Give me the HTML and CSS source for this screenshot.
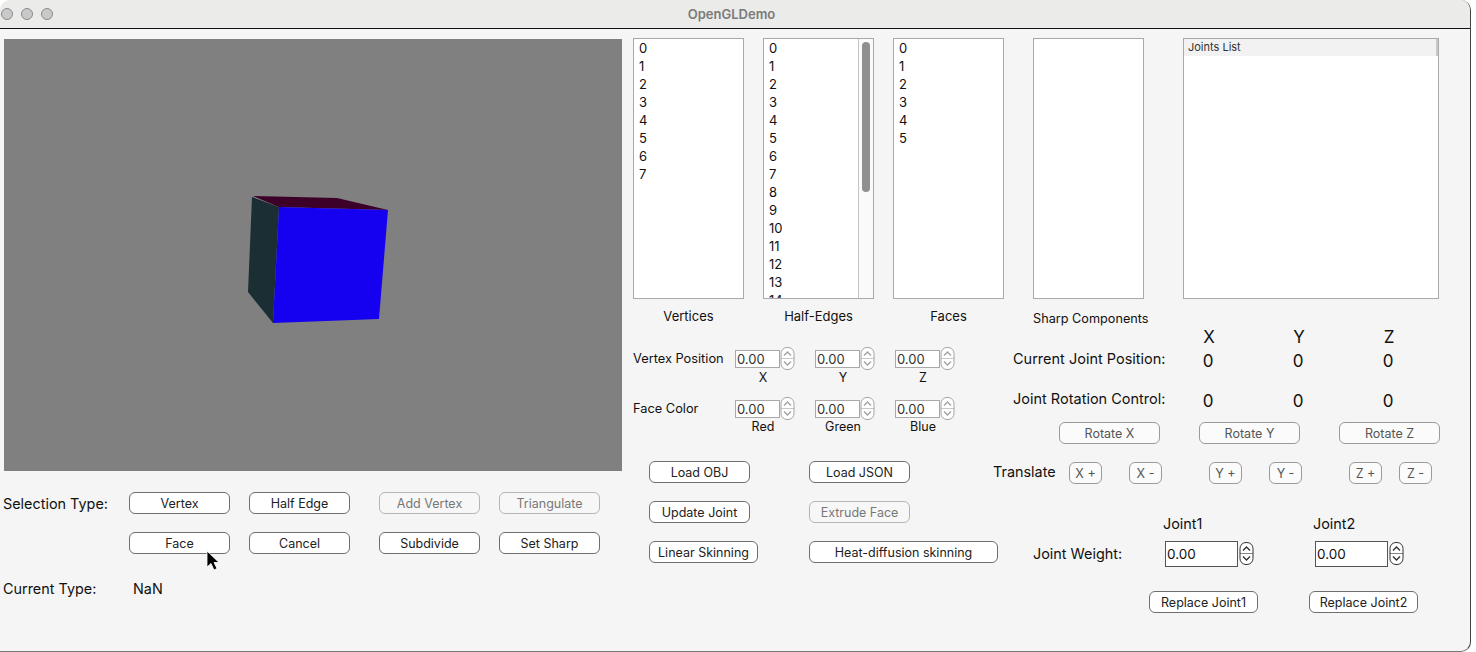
FILE: index.html
```html
<!DOCTYPE html>
<html lang="en">
<head>
    <meta charset="UTF-8">
    <meta name="viewport" content="width=device-width, initial-scale=1.0">
    <title>OpenGLDemo</title>
    <link rel="stylesheet" href="styles.css">
</head>
<body>
    <svg class="sprites" width="0" height="0">
        <symbol id="spin" viewBox="0 0 15 23">
            <rect x="1" y="0.5" width="13" height="22" rx="6" fill="#fff" stroke="currentColor"/>
            <path d="M1 11.5H14" stroke="currentColor" stroke-width="0.6"/>
            <path d="M4 8.5 7.5 5 11 8.5M4 14.5 7.5 18 11 14.5" fill="none" stroke="currentColor" stroke-width="1.4"/>
        </symbol>
    </svg>
    <div class="window">
        <div class="titlebar">
            <span class="light"></span><span class="light"></span><span class="light"></span>
            <div class="title">OpenGLDemo</div>
        </div>

        <div class="content">
            <div class="left">
                <div class="viewport">
                    <svg width="618" height="432" viewBox="4 39 618 432">
                        <polygon points="253,196 337,198 388,210 279,207" fill="#3c0029"/>
                        <polygon points="252,197 279,207 273,323 248,292" fill="#1b2e34"/>
                        <polygon points="279,207 388,210 379,319 273,323" fill="#1500f0"/>
                    </svg>
                </div>
                <div class="sel-row first">
                    <div class="sel-label">Selection Type:</div>
                    <button class="btn">Vertex</button>
                    <button class="btn">Half Edge</button>
                    <button class="btn off wide-gap">Add Vertex</button>
                    <button class="btn off">Triangulate</button>
                </div>
                <div class="sel-row">
                    <div class="sel-label"></div>
                    <button class="btn face-btn">Face</button>
                    <button class="btn">Cancel</button>
                    <button class="btn wide-gap">Subdivide</button>
                    <button class="btn">Set Sharp</button>
                </div>
                <div class="cur-row">
                    <div class="cur-label">Current Type:</div>
                    <div>NaN</div>
                </div>
            </div>

            <div class="right">
                <div class="lists">
                    <div class="list-col">
                        <ul class="list">
                            <li>0</li><li>1</li><li>2</li><li>3</li><li>4</li><li>5</li><li>6</li><li>7</li>
                        </ul>
                        <div class="list-name">Vertices</div>
                    </div>
                    <div class="list-col">
                        <div class="list scrolled">
                            <ul>
                                <li>0</li><li>1</li><li>2</li><li>3</li><li>4</li><li>5</li><li>6</li><li>7</li>
                                <li>8</li><li>9</li><li>10</li><li>11</li><li>12</li><li>13</li><li>14</li>
                            </ul>
                            <div class="scrollbar"><div class="thumb"></div></div>
                        </div>
                        <div class="list-name">Half-Edges</div>
                    </div>
                    <div class="list-col">
                        <ul class="list">
                            <li>0</li><li>1</li><li>2</li><li>3</li><li>4</li><li>5</li>
                        </ul>
                        <div class="list-name">Faces</div>
                    </div>
                    <div class="list-col sharp">
                        <ul class="list"></ul>
                        <div class="list-name">Sharp Components</div>
                    </div>
                    <div class="list-col joints">
                        <div class="list">
                            <div class="list-head">Joints List</div>
                        </div>
                    </div>
                </div>

                <div class="lower">
                    <div class="form-col">
                        <div class="spin-row">
                            <div class="spin-label">Vertex Position</div>
                            <div class="spin-item"><div class="spin"><span class="num">0.00</span><svg width="15" height="23"><use href="#spin"/></svg></div><div class="cap">X</div></div>
                            <div class="spin-item"><div class="spin"><span class="num">0.00</span><svg width="15" height="23"><use href="#spin"/></svg></div><div class="cap">Y</div></div>
                            <div class="spin-item"><div class="spin"><span class="num">0.00</span><svg width="15" height="23"><use href="#spin"/></svg></div><div class="cap">Z</div></div>
                        </div>
                        <div class="spin-row second">
                            <div class="spin-label">Face Color</div>
                            <div class="spin-item"><div class="spin"><span class="num">0.00</span><svg width="15" height="23"><use href="#spin"/></svg></div><div class="cap">Red</div></div>
                            <div class="spin-item"><div class="spin"><span class="num">0.00</span><svg width="15" height="23"><use href="#spin"/></svg></div><div class="cap">Green</div></div>
                            <div class="spin-item"><div class="spin"><span class="num">0.00</span><svg width="15" height="23"><use href="#spin"/></svg></div><div class="cap">Blue</div></div>
                        </div>
                        <div class="load-row top">
                            <button class="btn">Load OBJ</button>
                            <button class="btn">Load JSON</button>
                        </div>
                        <div class="load-row">
                            <button class="btn">Update Joint</button>
                            <button class="btn off">Extrude Face</button>
                        </div>
                        <div class="load-row">
                            <button class="btn linear">Linear Skinning</button>
                            <button class="btn heat">Heat-diffusion skinning</button>
                        </div>
                    </div>

                    <div class="joint-col">
                        <div class="axis-row heads"><span>X</span><span>Y</span><span>Z</span></div>
                        <div class="axis-row values">
                            <div class="joint-label">Current Joint Position:</div>
                            <span>0</span><span>0</span><span>0</span>
                        </div>
                        <div class="axis-row values rot">
                            <div class="joint-label">Joint Rotation Control:</div>
                            <span>0</span><span>0</span><span>0</span>
                        </div>
                        <div class="rotate-row">
                            <button class="btn soft">Rotate X</button>
                            <button class="btn soft">Rotate Y</button>
                            <button class="btn soft">Rotate Z</button>
                        </div>
                        <div class="translate-row">
                            <div class="translate-label">Translate</div>
                            <button class="btn soft small">X +</button>
                            <button class="btn soft small">X -</button>
                            <button class="btn soft small gap-y">Y +</button>
                            <button class="btn soft small">Y -</button>
                            <button class="btn soft small gap-z">Z +</button>
                            <button class="btn soft small gap-zm">Z -</button>
                        </div>
                        <div class="weight-heads"><span>Joint1</span><span>Joint2</span></div>
                        <div class="weight-row">
                            <div class="weight-label">Joint Weight:</div>
                            <div class="spin big"><span class="num">0.00</span><svg width="15" height="23"><use href="#spin"/></svg></div>
                            <div class="spin big"><span class="num">0.00</span><svg width="15" height="23"><use href="#spin"/></svg></div>
                        </div>
                        <div class="replace-row">
                            <button class="btn replace">Replace Joint1</button>
                            <button class="btn replace">Replace Joint2</button>
                        </div>
                    </div>
                </div>
            </div>
        </div>
    </div>
    <svg class="cursor" width="16" height="22" viewBox="0 0 16 22">
        <path d="M1 1V17L5 13.5 8 20 11 18.5 8 12.5H13Z" fill="#000" stroke="#fff" stroke-width="0.8"/>
    </svg>
</body>
</html>
```

FILE: styles.css
```css
* {
    margin: 0;
    padding: 0;
    box-sizing: border-box;
}

body {
    width: 1476px;
    height: 652px;
    overflow: hidden;
    background: #fff;
    font-family: 'Inter', 'Liberation Sans', sans-serif;
    font-size: 13px;
    color: #111;
}

.sprites {
    display: block;
}

.window {
    width: 1471px;
    height: 652px;
    background: #f5f5f5;
    border-right: 1px solid #444;
    border-bottom: 1px solid #777;
    border-radius: 10px 10px 10px 0;
    overflow: hidden;
}

.titlebar {
    height: 29px;
    background: #ebebe9;
    border-bottom: 1px solid #111;
    display: flex;
    align-items: center;
    padding-left: 1px;
    gap: 8px;
    position: relative;
}

.light {
    width: 12px;
    height: 12px;
    border-radius: 50%;
    background: #c9c9c9;
    border: 1px solid #8b8b8b;
}

.title {
    position: absolute;
    left: 0;
    right: 7px;
    text-align: center;
    font-size: 13px;
    font-weight: 600;
    color: #7a7a7a;
}

.content {
    display: flex;
}

/* left side */
.left {
    width: 633px;
    padding-left: 4px;
    padding-top: 10px;
}

.viewport {
    width: 618px;
    height: 432px;
    background: #808080;
}

.viewport svg {
    display: block;
}

.sel-row {
    display: flex;
    align-items: center;
    height: 22px;
    margin-top: 18px;
    margin-left: -1px;
}

.sel-row.first {
    margin-top: 21px;
}

.sel-label {
    width: 126px;
    font-size: 14.4px;
    white-space: nowrap;
}

.btn {
    width: 101px;
    height: 22px;
    flex: none;
    background: #fff;
    border: 1px solid #6f6f6f;
    border-radius: 6px;
    font-family: inherit;
    font-size: 12.5px;
    color: #222;
    text-align: center;
}

.btn.off {
    color: #777;
    border-color: #b5b5b5;
    background: #f7f7f7;
}

.btn.soft {
    color: #555;
    border-color: #9a9a9a;
    background: #fbfbfb;
}

.sel-row .btn + .btn {
    margin-left: 19px;
}

.sel-row .btn.wide-gap {
    margin-left: 29px;
}

.cur-row {
    display: flex;
    align-items: center;
    margin-top: 26px;
    margin-left: -1px;
    font-size: 14.4px;
}

.cur-label {
    width: 130px;
}

/* right side */
.right {
    flex: 1;
}

.lists {
    display: flex;
    padding-top: 9px;
}

.list-col {
    width: 111px;
    margin-right: 19px;
}

.list-col.sharp {
    margin-left: 10px;
    margin-right: 39px;
}

.list-col.joints {
    width: 256px;
    margin-right: 0;
}

.list {
    display: block;
    list-style: none;
    height: 261px;
    background: #fff;
    border: 1px solid #a9a9a9;
    padding: 0 0 0 5px;
    overflow: hidden;
    font-size: 13px;
    line-height: 18px;
}

.list.scrolled {
    display: flex;
    justify-content: space-between;
    padding-right: 0;
}

.list.scrolled ul {
    list-style: none;
}

.scrollbar {
    width: 15px;
    height: 260px;
    border-left: 1px solid #c4c4c4;
    background: #fafafa;
    padding: 3px 3px 0;
}

.thumb {
    width: 8px;
    height: 150px;
    border-radius: 4px;
    background: #8f8f8f;
}

.joints .list {
    padding: 0;
}

.list-head {
    height: 17px;
    line-height: 16px;
    padding-left: 4px;
    font-size: 11px;
    color: #333;
    background: #f2f2f2;
    border-right: 2px solid #c8c8c8;
}

.list-name {
    margin-top: 9px;
    text-align: center;
    line-height: 16px;
    white-space: nowrap;
}

.sharp .list-name {
    margin-top: 12px;
    margin-bottom: -1px;
    text-align: left;
    font-size: 12.7px;
}

.lower {
    display: flex;
}

.form-col {
    width: 366px;
    padding-top: 23px;
}

.spin-row {
    display: flex;
    height: 40px;
}

.spin-row.second {
    margin-top: 10px;
}

.spin-label {
    width: 102px;
    line-height: 20px;
    font-size: 12.8px;
    white-space: nowrap;
}

.spin-item {
    width: 80px;
    margin-top: -2px;
}

.spin {
    display: flex;
    align-items: center;
    height: 23px;
    color: #a3a3a3;
}

.num {
    width: 45px;
    height: 18px;
    line-height: 16px;
    background: #fff;
    border: 1px solid #a9a9a9;
    padding-left: 1px;
    font-size: 13px;
    color: #333;
}

.cap {
    width: 56px;
    text-align: center;
    line-height: 13px;
    margin-top: 1px;
    font-size: 12.5px;
}

.second .cap {
    margin-top: 0;
}

.load-row {
    display: flex;
    gap: 59px;
    margin-top: 18px;
    padding-left: 16px;
}

.load-row.top {
    margin-top: 22px;
}

.btn.linear {
    width: 109px;
    margin-right: -8px;
}

.btn.heat {
    width: 189px;
}

.joint-col {
    flex: 1;
}

.axis-row {
    display: flex;
    padding-left: 14px;
}

.axis-row span {
    width: 90px;
    text-align: center;
    font-size: 17px;
}

.axis-row.heads {
    padding-left: 165px;
    margin-top: 1px;
    height: 20px;
    line-height: 20px;
}

.axis-row.values {
    height: 20px;
    line-height: 20px;
    margin-top: 4px;
}

.axis-row.rot {
    margin-top: 20px;
}

.joint-label {
    width: 150px;
    font-size: 14.5px;
    white-space: nowrap;
    line-height: 16px;
}

.rotate-row {
    display: flex;
    gap: 39px;
    margin-top: 11px;
    padding-left: 60px;
}

.translate-row {
    display: flex;
    align-items: center;
    margin-top: 18px;
    margin-left: -6px;
}

.translate-label {
    width: 76px;
    font-size: 14.4px;
    margin-top: -4px;
}

.btn.small {
    width: 33px;
    margin-right: 27px;
}

.btn.small.gap-y {
    margin-left: 20px;
}

.btn.small.gap-z {
    margin-left: 20px;
    margin-right: 17px;
}

.btn.small.gap-zm {
    margin-right: 0;
}

.weight-heads {
    display: flex;
    margin-top: 32px;
    padding-left: 164px;
    font-size: 14.4px;
    line-height: 16px;
}

.weight-heads span {
    width: 150px;
}

.weight-row {
    display: flex;
    align-items: center;
    margin-top: 10px;
    padding-left: 34px;
}

.weight-label {
    width: 132px;
    font-size: 14.4px;
}

.spin.big {
    width: 150px;
    color: #333;
    gap: 1px;
}

.spin.big .num {
    width: 73px;
    height: 26px;
    line-height: 24px;
    border-color: #555;
    color: #111;
    font-size: 13.5px;
}

.replace-row {
    display: flex;
    gap: 51px;
    margin-top: 26px;
    padding-left: 150px;
}

.btn.replace {
    width: 109px;
}

.cursor {
    position: absolute;
    left: 206px;
    top: 550px;
}
```
